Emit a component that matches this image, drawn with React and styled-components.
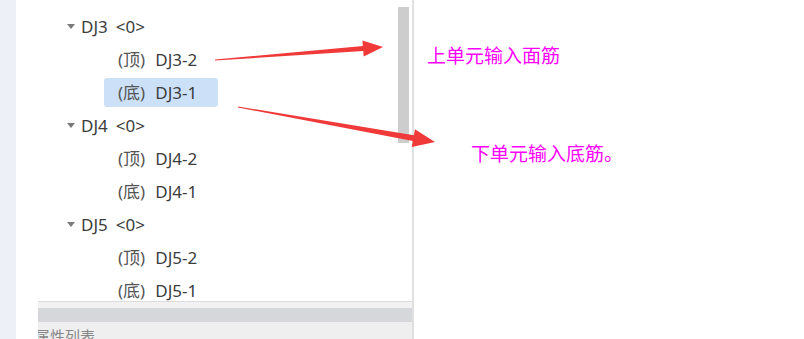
import React from 'react'
import styled, { createGlobalStyle } from 'styled-components'

const Global = createGlobalStyle`
    html, body {
        margin: 0;
        padding: 0;
        background: #fff;
        overflow: hidden;
    }
    body {
        font-family: "Noto Sans", "Noto Sans CJK SC", sans-serif;
    }
`

const groups = [
    { name: 'DJ3', count: 0, children: [['顶', 'DJ3-2'], ['底', 'DJ3-1', true]] },
    { name: 'DJ4', count: 0, children: [['顶', 'DJ4-2'], ['底', 'DJ4-1']] },
    { name: 'DJ5', count: 0, children: [['顶', 'DJ5-2'], ['底', 'DJ5-1']] },
]

const App = () => {
    return (
        <Page>
            <Global />
            <SideStrip />
            <Column>
                <TreeArea>
                    <TreeList>
                        {groups.map(g => (
                            <React.Fragment key={g.name}>
                                <ParentRow>
                                    <Caret />
                                    <Name>{g.name}</Name>
                                    <Count>&lt;{g.count}&gt;</Count>
                                </ParentRow>
                                {g.children.map(([pos, label, selected]) => (
                                    <ChildRow key={label}>
                                        <Item $selected={selected}>
                                            <Pos>({pos})</Pos>
                                            <Name>{label}</Name>
                                        </Item>
                                    </ChildRow>
                                ))}
                            </React.Fragment>
                        ))}
                    </TreeList>
                    <ScrollTrack>
                        <Thumb />
                    </ScrollTrack>
                </TreeArea>
                <LowerPanel>
                    <Gap />
                    <Bar />
                    <LabelArea>
                        <Label>属性列表</Label>
                    </LabelArea>
                </LowerPanel>
            </Column>
            <Canvas>
                <Note $top={43} $left={13}>上单元输入面筋</Note>
                <Note $top={75} $left={57}>下单元输入底筋。</Note>
            </Canvas>
            <Arrows width="804" height="339" viewBox="0 0 804 339">
                <polygon
                    fill="#f03a3a"
                    points="214.96,59.5 362.87,46.05 362.44,40.56 383,47 363.68,56.52 363.25,51.03 215.04,60.5"
                />
                <polygon
                    fill="#f03a3a"
                    points="238.09,106.51 413.86,135.2 414.91,129.29 435,142 411.77,147.01 412.82,141.1 237.91,107.49"
                />
            </Arrows>
        </Page>
    )
}

const Page = styled.div`
    position: relative;
    display: flex;
    width: 804px;
    height: 339px;
    overflow: hidden;
    background: #fff;
`
const SideStrip = styled.div`
    width: 16px;
    flex-shrink: 0;
    background: #edf1f7;
`
const Column = styled.div`
    width: 398px;
    flex-shrink: 0;
    box-sizing: border-box;
    border-right: 2px solid #e0e0e0;
    display: flex;
    flex-direction: column;
`
const TreeArea = styled.div`
    height: 301px;
    flex-shrink: 0;
    display: flex;
    overflow: hidden;
    background: #fff;
`
const TreeList = styled.div`
    flex: 1;
    padding-top: 10px;
    font-size: 17px;
    line-height: 20px;
    color: #3c3c3c;
`
const ParentRow = styled.div`
    height: 33px;
    display: flex;
    align-items: center;
    padding-left: 51px;
`
const Caret = styled.span`
    width: 0;
    height: 0;
    border-left: 4px solid transparent;
    border-right: 4px solid transparent;
    border-top: 5px solid #7a7a7a;
    margin-right: 6px;
`
const Name = styled.span`
    color: #3c3c3c;
`
const Count = styled.span`
    margin-left: 8px;
    color: #3c3c3c;
`
const ChildRow = styled.div`
    height: 33px;
    display: flex;
    align-items: center;
    padding-left: 88px;
`
const Item = styled.div`
    display: flex;
    align-items: center;
    box-sizing: border-box;
    width: 114px;
    height: 29px;
    padding-left: 14px;
    border-radius: 3px;
    background: ${p => (p.$selected ? '#cce1f8' : 'transparent')};
`
const Pos = styled.span`
    color: #555;
    margin-right: 10px;
`
const ScrollTrack = styled.div`
    width: 15px;
    flex-shrink: 0;
`
const Thumb = styled.div`
    width: 11px;
    height: 136px;
    margin: 7px 0 0 1px;
    background: #cdcdcd;
`
const LowerPanel = styled.div`
    flex: 1;
    margin-left: 22px;
    border-top: 1px solid #dcdcdc;
    display: flex;
    flex-direction: column;
    overflow: hidden;
`
const Gap = styled.div`
    height: 6px;
    flex-shrink: 0;
    background: #f2f2f2;
`
const Bar = styled.div`
    height: 14px;
    flex-shrink: 0;
    background: #d5d7db;
`
const LabelArea = styled.div`
    flex: 1;
    background: #efefef;
    padding-top: 5px;
`
const Label = styled.div`
    margin-left: -3px;
    font-family: "Noto Sans CJK SC", sans-serif;
    font-size: 15px;
    line-height: 18px;
    color: #888;
`
const Canvas = styled.div`
    flex: 1;
    display: flex;
    flex-direction: column;
    align-items: flex-start;
`
const Note = styled.div`
    margin-top: ${p => p.$top}px;
    margin-left: ${p => p.$left}px;
    font-family: "Noto Sans CJK SC", sans-serif;
    font-size: 19px;
    line-height: 23px;
    color: #f0f;
`
const Arrows = styled.svg`
    position: absolute;
    left: 0;
    top: 0;
    pointer-events: none;
`

export default App
